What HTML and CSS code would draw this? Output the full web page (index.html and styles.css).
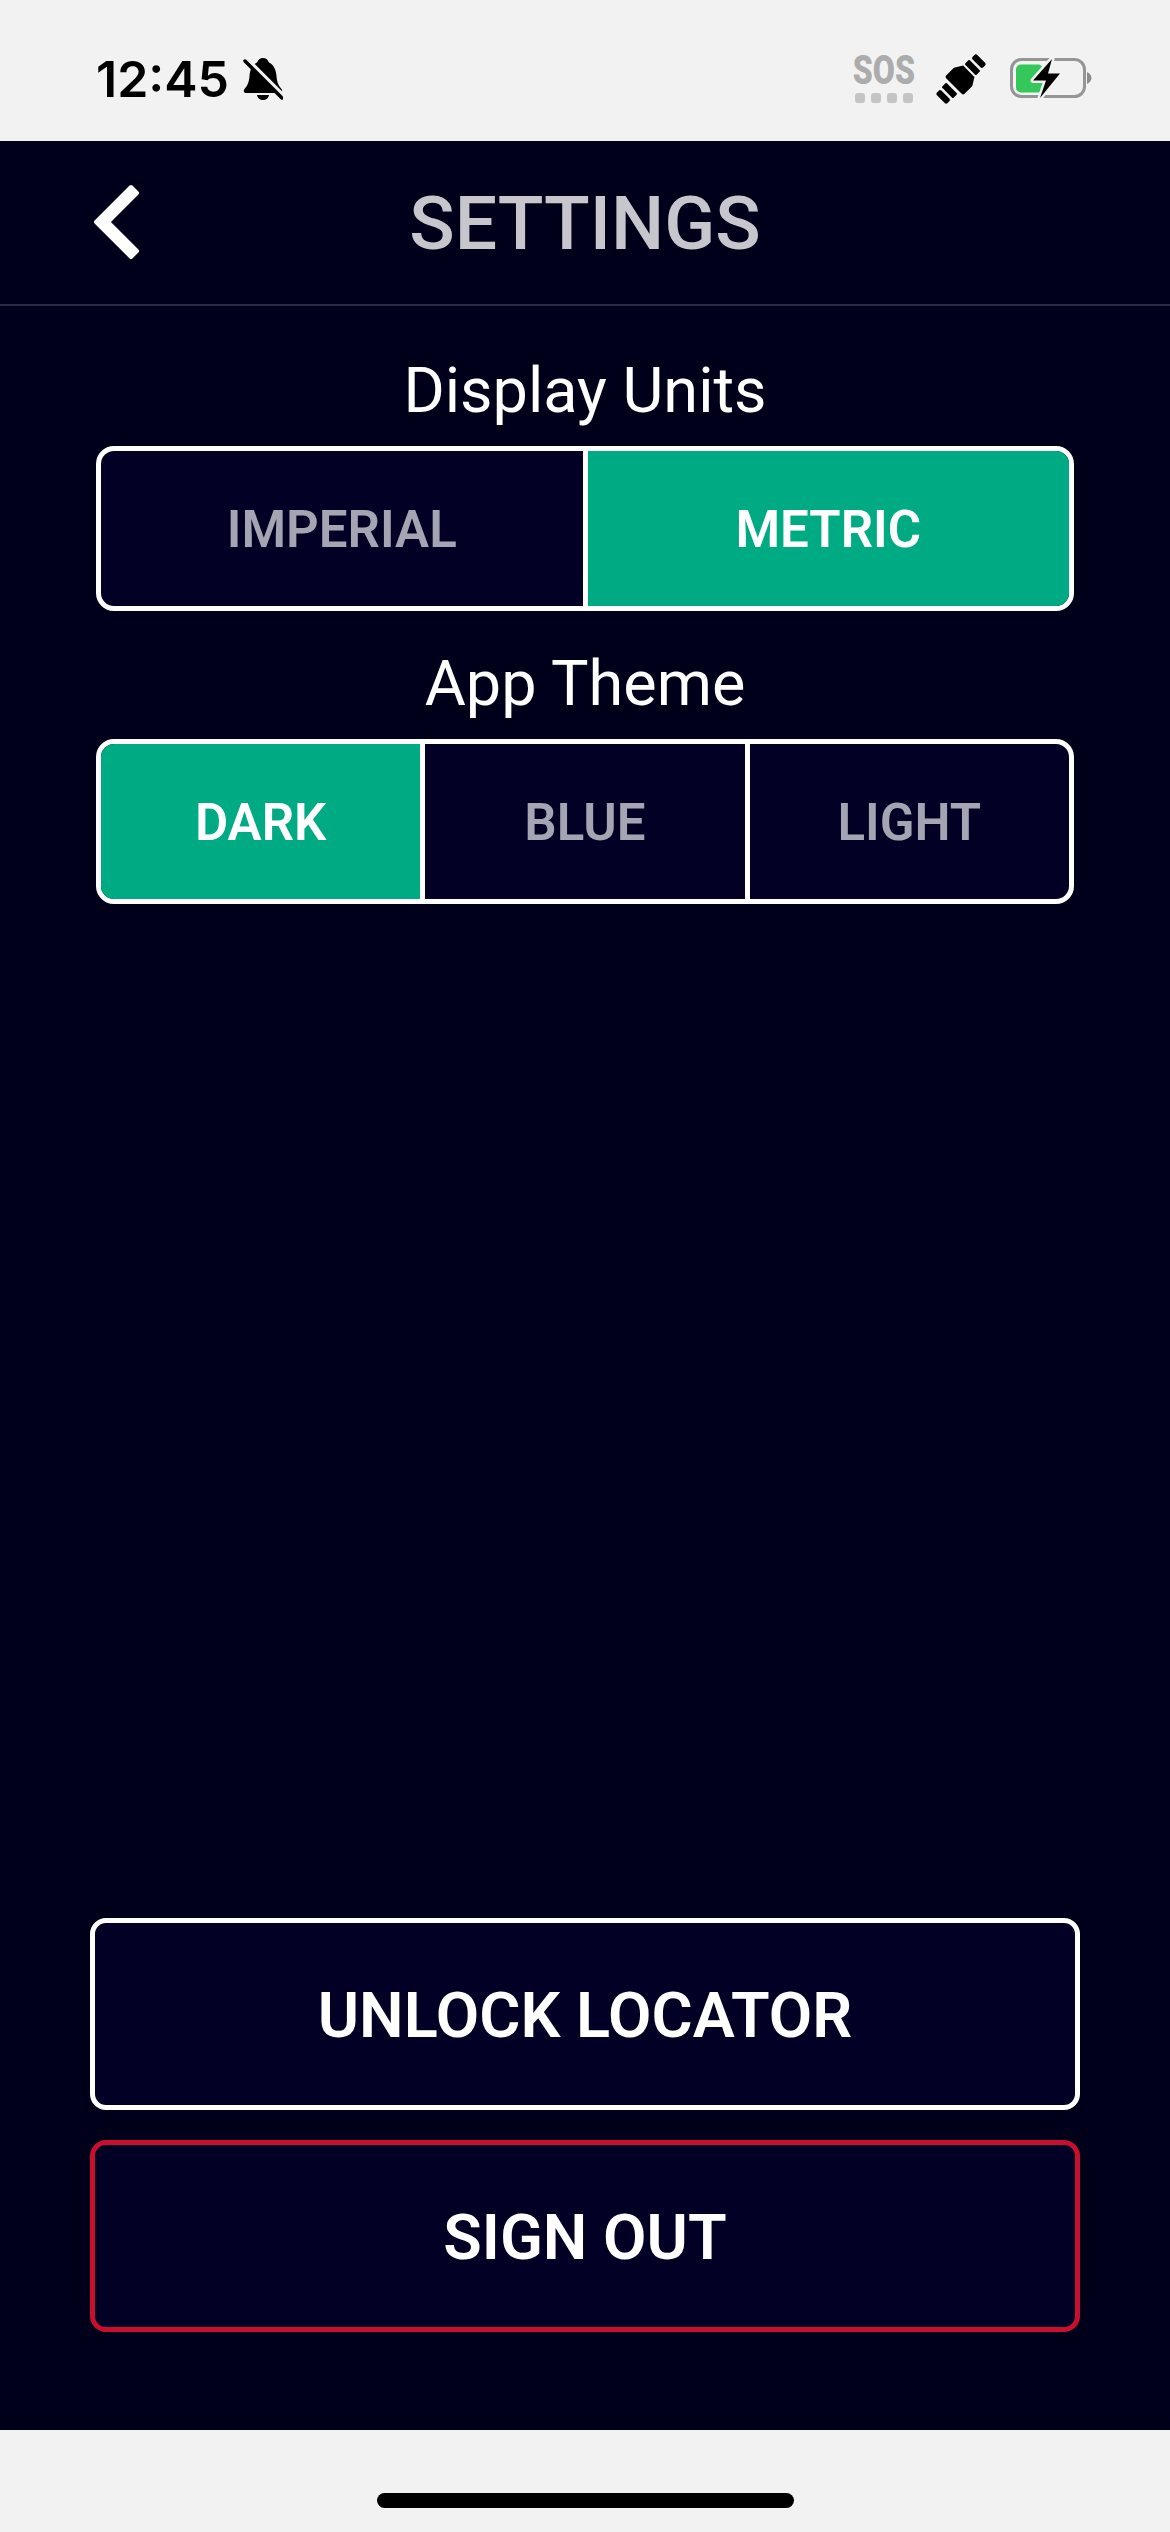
FILE: index.html
```html
<!DOCTYPE html>
<html lang="en">
<head>
    <meta charset="UTF-8">
    <meta name="viewport" content="width=device-width, initial-scale=1.0">
    <title>Settings</title>
    <link rel="stylesheet" href="styles.css">
</head>
<body>
    <div class="status-bar">
        <div class="status-left">
            <span class="clock">12:45</span>
            <svg class="bell" width="40" height="42" viewBox="0 0 40 42">
                <path d="M20 0c-3 0-5 2-6 4.500C9 7 7 12 6.500 18 6 25 4 28 1.500 31 0 33 1 35 3 35h34c2 0 3-2 1.500-4C36 28 34 25 33.500 18 33 12 31 7 26 4.500 25 2 23 0 20 0z"/>
                <path d="M14 37h12c-.5 3-3 5-6 5s-5.500-2-6-5z"/>
                <path class="bell-gap" d="M4 1l36 36"/>
                <path class="bell-slash" d="M2 3l37 37"/>
            </svg>
        </div>
        <div class="status-right">
            <div class="sos">
                <span class="sos-text">SOS</span>
                <div class="sos-dots"><i></i><i></i><i></i><i></i></div>
            </div>
            <svg class="satellite" width="56" height="56" viewBox="-28 -28 56 56">
                <g transform="rotate(-45)">
                    <rect x="22" y="-7.500" width="6.500" height="15" rx="2"/>
                    <rect x="13" y="-8" width="6.500" height="16" rx="1"/>
                    <path d="M-10-11q0-2 2-2h11l8 5v16l-8 5h-11q-2 0-2-2z"/>
                    <rect x="-19.500" y="-8" width="6.500" height="16" rx="1"/>
                    <rect x="-28.500" y="-7.500" width="6.500" height="15" rx="2"/>
                </g>
            </svg>
            <svg class="battery" width="84" height="42" viewBox="0 0 84 42">
                <rect x="1.500" y="1.500" width="73" height="37" rx="10" class="battery-shell"/>
                <path class="battery-nub" d="M77 14c2.500 1 4.500 3.500 4.500 6s-2 5-4.500 6z"/>
                <rect class="battery-level" x="6" y="6.500" width="27" height="28" rx="5"/>
                <path class="battery-bolt" d="M42 1L23 22.500h13L30 40l20-24.500H38z"/>
            </svg>
        </div>
    </div>

    <main class="screen">
        <header class="top-bar">
            <svg class="back" width="50" height="80" viewBox="90 184 50 80">
                <path d="M96 223L131 188l6 6-29 29 29 29-6 6z"/>
            </svg>
            <h1>SETTINGS</h1>
            <span></span>
        </header>

        <div class="options">
            <section class="option">
                <h2>Display Units</h2>
                <div class="segments">
                    <button>IMPERIAL</button>
                    <button class="active">METRIC</button>
                </div>
            </section>
            <section class="option">
                <h2>App Theme</h2>
                <div class="segments">
                    <button class="active">DARK</button>
                    <button>BLUE</button>
                    <button>LIGHT</button>
                </div>
            </section>
        </div>

        <div class="actions">
            <button class="action">UNLOCK LOCATOR</button>
            <button class="action danger">SIGN OUT</button>
        </div>
    </main>

    <div class="home-area">
        <div class="home-bar"></div>
    </div>
</body>
</html>
```

FILE: styles.css
```css
* {
    box-sizing: border-box;
    margin: 0;
    padding: 0;
}

body {
    width: 1170px;
    height: 2532px;
    display: flex;
    flex-direction: column;
    font-family: Roboto, sans-serif;
    background-color: #f2f2f2;
    overflow: hidden;
}

.status-bar {
    height: 141px;
    flex: none;
    display: flex;
    justify-content: space-between;
    align-items: center;
    padding: 16px 76px 0 96px;
}
.status-left {
    display: flex;
    align-items: center;
    gap: 14px;
}
.clock {
    font-family: Inter, sans-serif;
    font-size: 50px;
    font-weight: 600;
    line-height: 56px;
    color: #000;
}
.status-right {
    display: flex;
    align-items: center;
}
.sos {
    width: 62px;
    display: flex;
    flex-direction: column;
    align-items: center;
    gap: 7px;
    margin-top: 2px;
    margin-right: 18px;
}
.sos-text {
    font-size: 40px;
    font-weight: 900;
    line-height: 30px;
    color: #acacac;
    transform: scaleX(0.8);
}
.sos-dots {
    display: flex;
    gap: 6px;
}
.sos-dots i {
    width: 10px;
    height: 10px;
    border-radius: 3px;
    background-color: #c4c4c4;
}
.satellite {
    margin-right: 21px;
}
.bell-gap {
    stroke: #f2f2f2;
    stroke-width: 4;
}
.bell-slash {
    stroke: #000;
    stroke-width: 3.5;
    stroke-linecap: round;
}
.battery-shell {
    fill: none;
    stroke: #959595;
    stroke-width: 3;
}
.battery-nub {
    fill: #8c8c8c;
}
.battery-level {
    fill: #34c759;
}
.battery-bolt {
    fill: #000;
    stroke: #f2f2f2;
    stroke-width: 5;
    stroke-linejoin: round;
    paint-order: stroke;
}

.screen {
    flex: 1;
    display: flex;
    flex-direction: column;
    background-color: #00001a;
}
.top-bar {
    height: 165px;
    flex: none;
    display: grid;
    grid-template-columns: 1fr auto 1fr;
    align-items: center;
    padding-left: 90px;
    padding-right: 90px;
    border-bottom: 2px solid #2f2b47;
}
.back {
    fill: #fff;
    stroke: #fff;
    stroke-width: 4;
    stroke-linejoin: round;
}
h1 {
    font-size: 75px;
    font-weight: 500;
    color: #c6c6cc;
}

.options {
    display: flex;
    flex-direction: column;
    gap: 38px;
    padding: 47px 96px 0;
}
h2 {
    font-size: 63px;
    font-weight: 400;
    line-height: 76px;
    color: #fff;
    text-align: center;
    margin-bottom: 17px;
}
.option + .option h2 {
    margin-top: -3px;
}
.segments {
    height: 165px;
    display: flex;
    border: 5px solid #fff;
    border-radius: 18px;
    overflow: hidden;
    background-color: #020024;
}
.segments button {
    flex: 1;
    border: none;
    border-left: 5px solid #fff;
    padding-top: 2px;
    font-family: Roboto, sans-serif;
    font-size: 51px;
    font-weight: 600;
    color: #a5a4b3;
    background-color: transparent;
}
.segments button:first-child {
    border-left: none;
}
.segments .active {
    color: #fff;
    background-color: #00ab84;
}

.actions {
    margin-top: auto;
    display: flex;
    flex-direction: column;
    gap: 30px;
    padding: 0 90px 98px;
}
.action {
    height: 192px;
    border: 5px solid #fff;
    border-radius: 16px;
    padding-top: 2px;
    font-family: Roboto, sans-serif;
    font-size: 63px;
    font-weight: 600;
    color: #fff;
    background-color: #020024;
}
.danger {
    border-color: #c8102e;
}

.home-area {
    height: 102px;
    flex: none;
    display: flex;
    justify-content: center;
    padding-top: 63px;
}
.home-bar {
    width: 417px;
    height: 15px;
    border-radius: 8px;
    background-color: #000;
}
```
